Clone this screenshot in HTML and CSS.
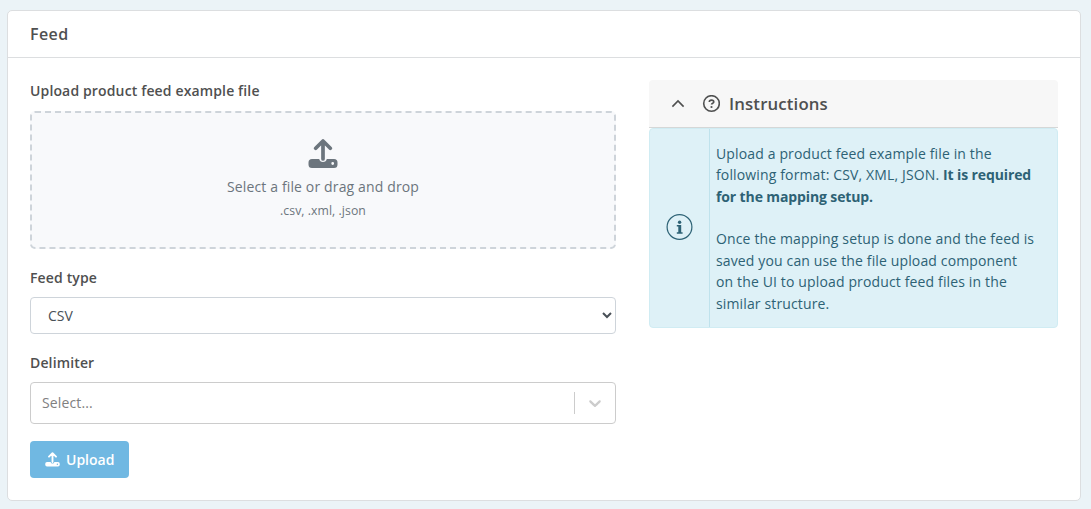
FILE: index.html
```html
<!DOCTYPE html>
<html lang="en">

<head>
    <meta charset="UTF-8">
    <meta name="viewport" content="width=device-width, initial-scale=1.0">
    <title>Feed</title>
    <link rel="stylesheet" href="styles.css">
</head>

<body>

    <div class="card">
        <div class="card-header">Feed</div>

        <div class="card-body">

            <!-- Feed form -->
            <form class="feed-form">
                <label class="form-label">Upload product feed example file</label>
                <div class="dropzone">
                    <svg class="dropzone-icon" viewBox="0 0 30 30">
                        <path d="M15 2.5V20M7.7 9.3L15 2L22.3 9.3" fill="none" stroke="currentColor" stroke-width="3.7" stroke-linecap="round" stroke-linejoin="round" />
                        <path fill="currentColor" fill-rule="evenodd" d="M4 20h7.2a3.9 3.9 0 0 0 7.6 0H26a3.5 3.5 0 0 1 3.5 3.5v2A3.5 3.5 0 0 1 26 29H4a3.5 3.5 0 0 1-3.5-3.5v-2A3.5 3.5 0 0 1 4 20zM24.7 23.1a1.4 1.4 0 1 0 0 2.8a1.4 1.4 0 0 0 0-2.8z" />
                    </svg>
                    <div class="dropzone-title">Select a file or drag and drop</div>
                    <div class="dropzone-formats">.csv, .xml, .json</div>
                </div>

                <label class="form-label" for="feed-type">Feed type</label>
                <select class="form-select" id="feed-type">
                    <option>CSV</option>
                    <option>XML</option>
                    <option>JSON</option>
                </select>

                <label class="form-label">Delimiter</label>
                <div class="select-box">
                    <span class="select-placeholder">Select...</span>
                    <span class="select-separator"></span>
                    <svg class="select-arrow" viewBox="0 0 20 20">
                        <path d="M4.516 7.548c0.436-0.446 1.043-0.481 1.576 0l3.908 3.747 3.908-3.747c0.533-0.481 1.141-0.446 1.574 0 0.436 0.445 0.408 1.197 0 1.615-0.406 0.418-4.695 4.502-4.695 4.502-0.217 0.223-0.502 0.335-0.787 0.335s-0.57-0.112-0.789-0.335c0 0-4.287-4.084-4.695-4.502s-0.436-1.17 0-1.615z" />
                    </svg>
                </div>

                <button type="button" class="btn">
                    <svg class="btn-icon" viewBox="0 0 30 30">
                        <path d="M15 3V20M8 9.3L15 2.3L22 9.3" fill="none" stroke="currentColor" stroke-width="3.7" stroke-linecap="round" stroke-linejoin="round" />
                        <path fill="currentColor" fill-rule="evenodd" d="M4 20h7.2a3.9 3.9 0 0 0 7.6 0H26a3.5 3.5 0 0 1 3.5 3.5v2A3.5 3.5 0 0 1 26 29H4a3.5 3.5 0 0 1-3.5-3.5v-2A3.5 3.5 0 0 1 4 20zM24.7 23.1a1.4 1.4 0 1 0 0 2.8a1.4 1.4 0 0 0 0-2.8z" />
                    </svg>
                    <span>Upload</span>
                </button>
            </form>

            <!-- Instructions -->
            <div class="instructions">
                <div class="instructions-header">
                    <svg class="chevron" viewBox="0 0 16 16">
                        <path d="M2.4 10.6L8 5L13.6 10.6" />
                    </svg>
                    <svg class="question" viewBox="0 0 18 18">
                        <circle cx="9.5" cy="8.5" r="7.8" />
                        <path d="M7.3 6.9C7.3 5.7 8.2 5.1 9.5 5.1S11.8 5.8 11.8 6.9C11.8 8.2 9.5 8.2 9.5 9.6" />
                        <circle class="dot" cx="9.5" cy="12" r="1.1" />
                    </svg>
                    <span>Instructions</span>
                </div>
                <div class="alert">
                    <div class="alert-icon">
                        <svg viewBox="0 0 28 28">
                            <circle cx="13.5" cy="13" r="12.4" fill="none" stroke="currentColor" stroke-width="1.2" />
                            <circle cx="13.6" cy="8.3" r="1.7" fill="currentColor" />
                            <path fill="currentColor" d="M10.8 11.1h4.4v7.2h1.4v1.5h-5.8v-1.5h1.5v-5.7h-1.5z" />
                        </svg>
                    </div>
                    <div class="alert-text">
                        <p>Upload a product feed example file in the following format: CSV, XML, JSON. <b>It is required for the mapping setup.</b></p>
                        <p>Once the mapping setup is done and the feed is saved you can use the file upload component on the UI to upload product feed files in the similar structure.</p>
                    </div>
                </div>
            </div>

        </div>
    </div>

</body>

</html>
```
FILE: styles.css
```css
* {
    box-sizing: border-box;
}

body {
    margin: 0;
    padding: 10px 10px 8px 7px;
    background-color: #ebf3f7;
    color: #4f5050;
    font-family: "Open Sans", sans-serif;
    font-size: 14px;
    line-height: 21px;
    letter-spacing: 0.14px;
}

.card {
    height: 491px;
    background-color: white;
    border: 1px solid #dcdee0;
    border-radius: 5px;
}

.card-header {
    height: 47px;
    padding: 0 22px;
    border-bottom: 1px solid #dcdee0;
    font-size: 16px;
    font-weight: 600;
    line-height: 46px;
    letter-spacing: 0.4px;
}

.card-body {
    display: flex;
    align-items: flex-start;
    gap: 33px;
    padding: 22px;
}

.feed-form {
    width: 586px;
}

.form-label {
    display: block;
    margin-bottom: 9px;
    font-weight: 600;
}

/* Upload area */
.dropzone {
    display: flex;
    flex-direction: column;
    align-items: center;
    height: 138px;
    margin-top: 10px;
    margin-bottom: 18px;
    padding-top: 26px;
    border: 2px dashed #ced4da;
    border-radius: 5px;
    background-color: #f8f9fb;
    color: #6c757d;
}

.dropzone-icon {
    width: 30px;
    height: 30px;
    margin-bottom: 7px;
}

.dropzone-formats {
    margin-top: 3px;
    font-size: 12.25px;
    letter-spacing: 0.06px;
}

/* Fields */
.form-select {
    display: block;
    width: 100%;
    height: 37px;
    margin-bottom: 18px;
    padding: 0 1px 0 13px;
    border: 1px solid #ced4da;
    border-radius: 4px;
    background-color: white;
    color: #495057;
    font-family: inherit;
    font-size: 14px;
}

.select-box {
    display: flex;
    align-items: center;
    height: 42px;
    margin-bottom: 17px;
    padding: 0 10px 0 11px;
    border: 1px solid #ccc;
    border-radius: 4px;
    color: #808080;
}

.select-placeholder {
    flex: 1;
    padding-bottom: 2px;
}

.select-separator {
    width: 1px;
    height: 22px;
    margin-right: 10px;
    background-color: #ccc;
}

.select-arrow {
    width: 20px;
    height: 20px;
    fill: #ccc;
}

.btn {
    display: flex;
    align-items: center;
    gap: 6px;
    width: 99px;
    height: 37px;
    padding: 0 0 0 15px;
    border: 0;
    border-radius: 4px;
    background-color: #70b8e2;
    color: white;
    font-family: inherit;
    font-size: 14px;
    font-weight: 600;
}

.btn-icon {
    width: 15px;
    height: 15px;
}

/* Instructions */
.instructions {
    width: 409px;
}

.instructions-header {
    display: flex;
    align-items: center;
    height: 48px;
    padding-left: 21px;
    border-bottom: 1px solid #d5d7d7;
    border-radius: 4px 4px 0 0;
    background-color: #f7f7f7;
    font-size: 16.8px;
    font-weight: 600;
}

.chevron {
    width: 16px;
    height: 16px;
    margin-right: 16px;
}

.question {
    width: 18px;
    height: 18px;
    margin-right: 9px;
}

.chevron,
.question {
    fill: none;
    stroke: #4f5050;
    stroke-width: 1.6;
}

.question .dot {
    fill: #4f5050;
    stroke: none;
}

.alert {
    display: flex;
    height: 200px;
    border: 1px solid #d0ecf3;
    border-radius: 4px;
    background-color: #def1f7;
    color: #2d6275;
}

.alert-icon {
    display: flex;
    align-items: center;
    justify-content: center;
    width: 60px;
    border-right: 1px solid #bfe2ec;
}

.alert-icon svg {
    width: 28px;
    height: 28px;
}

.alert-text {
    flex: 1;
    padding: 14px 21px 0 6px;
    line-height: 21.4px;
}

.alert-text p {
    margin: 0 0 21.2px;
}

.alert-text b {
    letter-spacing: -0.12px;
}
```
